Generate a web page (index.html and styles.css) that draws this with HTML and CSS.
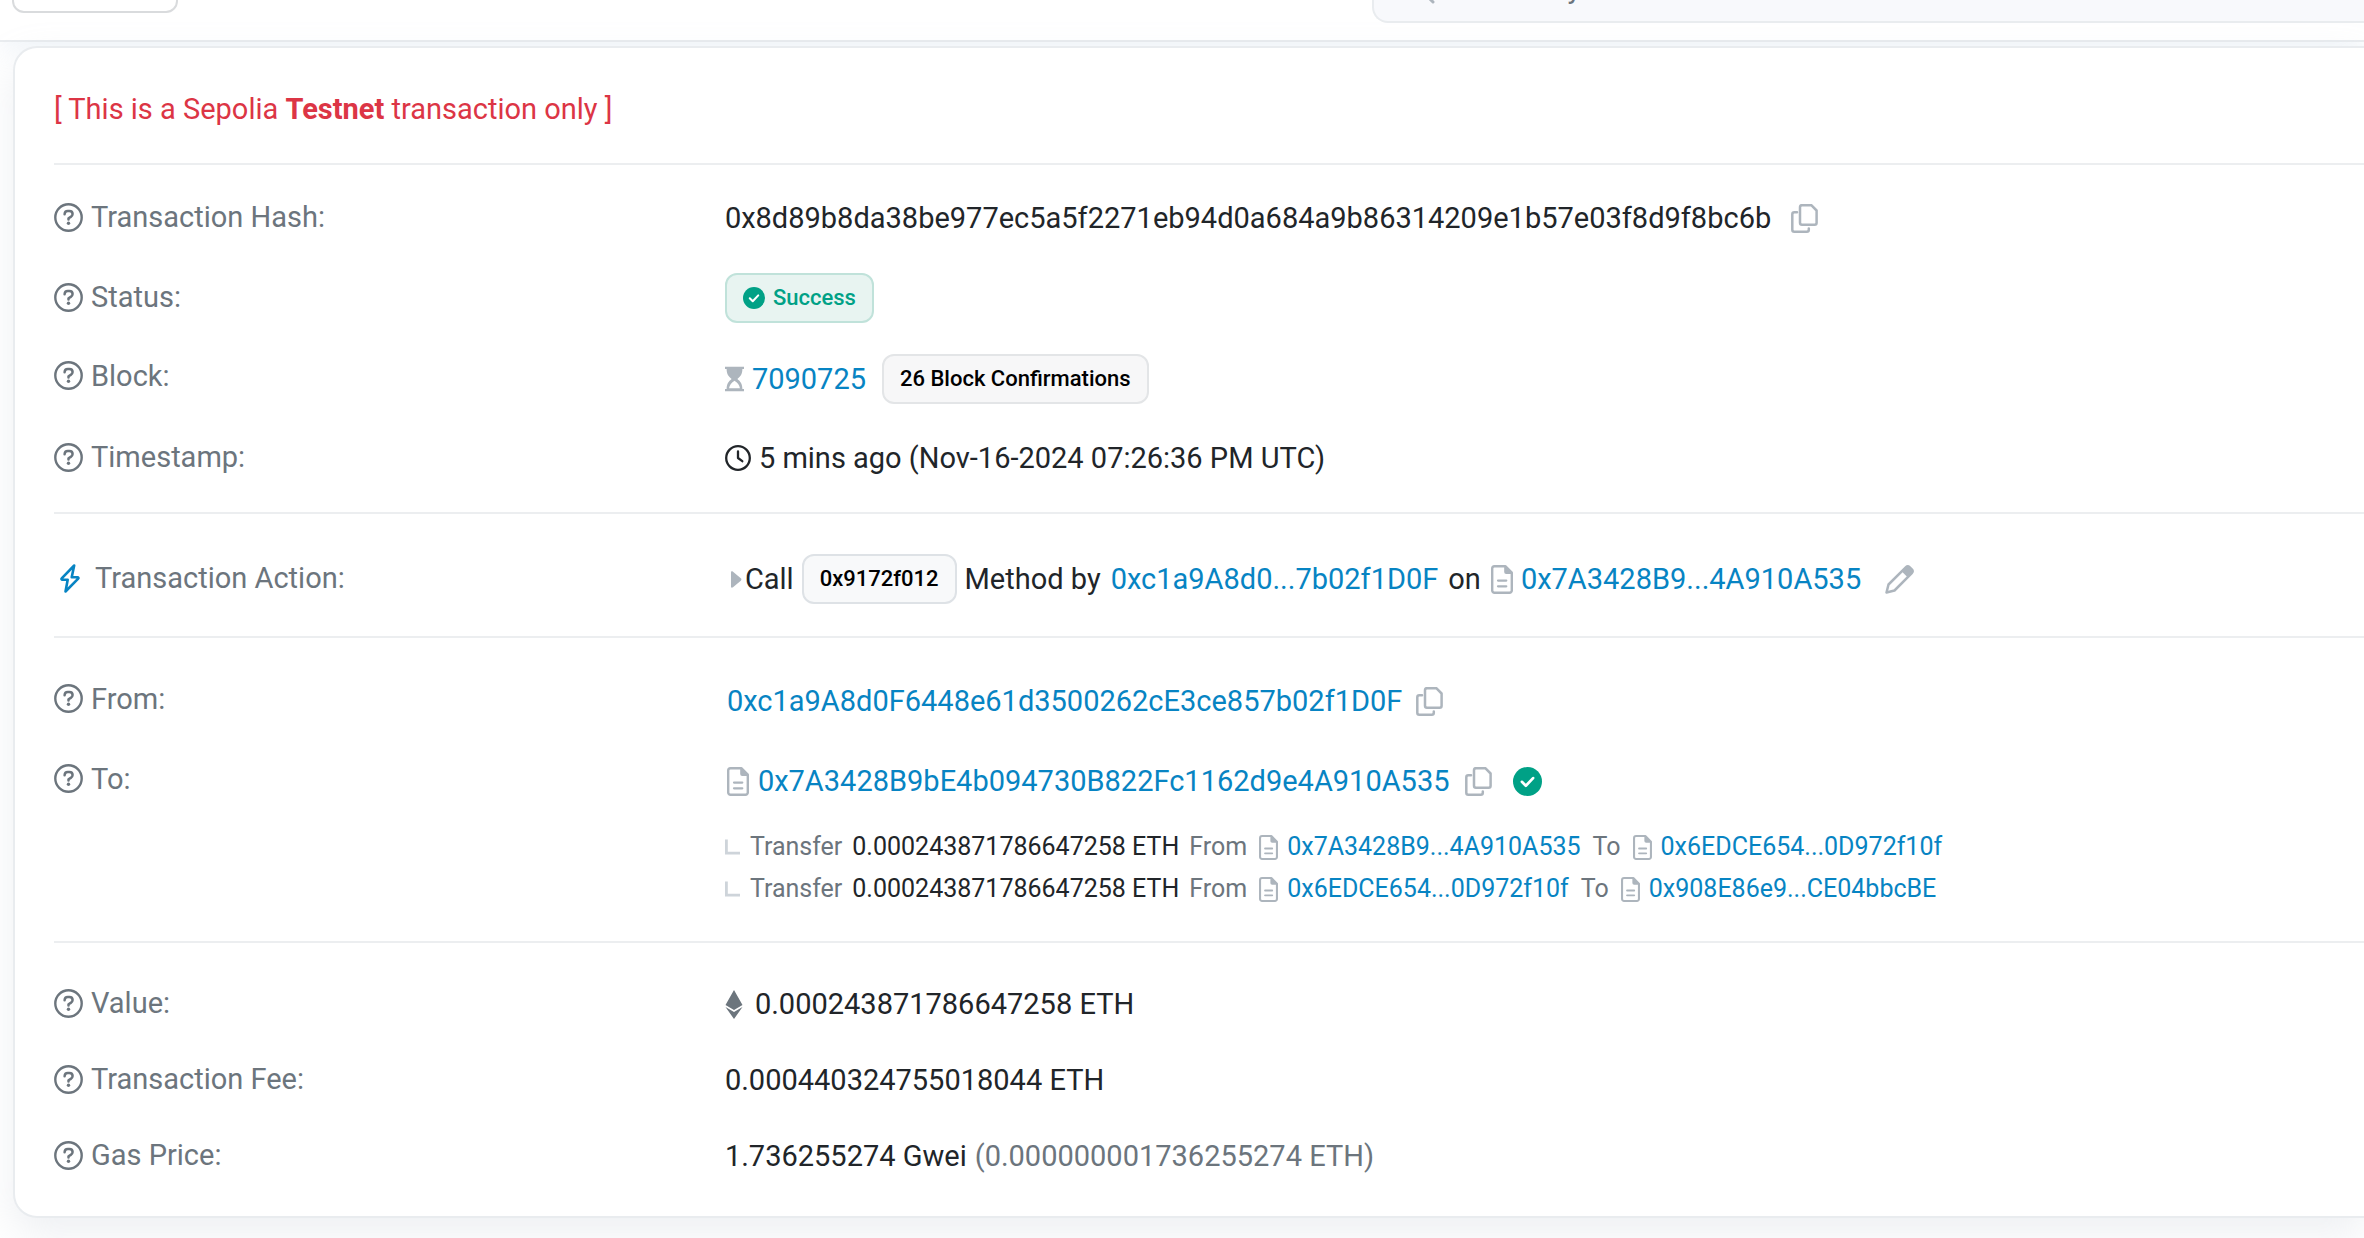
FILE: index.html
```html
<!DOCTYPE html>
<html lang="en">
<head>
<meta charset="utf-8">
<title>Transaction Details</title>
<link rel="stylesheet" href="styles.css">
</head>
<body>
<svg class="sprite" aria-hidden="true">
  <symbol id="help" viewBox="0 0 29 29">
    <circle cx="14.5" cy="14.5" r="13.2" fill="none" stroke="currentColor" stroke-width="2.4"/>
    <path d="M10.6 11.2c.1-2 1.400-3.100 3.100-3.100h1.700c1.900 0 3.200 1.300 3.200 3 0 1.300-.7 2.100-1.800 2.800l-2.300 1.400v1.300" fill="none" stroke="currentColor" stroke-width="2.500" stroke-linecap="round" stroke-linejoin="round"/>
    <circle cx="14.500" cy="20.300" r="1.700" fill="currentColor"/>
  </symbol>
  <symbol id="copy" viewBox="0 0 27 29">
    <path d="M11 1.200h9.300l5.300 5.300v12.200a2 2 0 0 1-2 2H11a2 2 0 0 1-2-2V3.200a2 2 0 0 1 2-2zM6 8.300H3.300a2 2 0 0 0-2 2v15.400a2 2 0 0 0 2 2h12.500a2 2 0 0 0 2-2v-1.200" fill="none" stroke="currentColor" stroke-width="2.500" stroke-linecap="round" stroke-linejoin="round"/>
  </symbol>
  <symbol id="doc" viewBox="0 0 22 29">
    <path d="M3.500 1.200h10.800l6.500 6.500v17.800a2.300 2.300 0 0 1-2.300 2.300h-15a2.300 2.300 0 0 1-2.300-2.300v-22a2.300 2.300 0 0 1 2.300-2.300z" fill="none" stroke="currentColor" stroke-width="2.400" stroke-linejoin="round"/>
    <path d="M13.200 1.200h1.100l6.500 6.500v1.300h-5.600a2 2 0 0 1-2-2z" fill="currentColor"/>
    <path d="M7 15.600h8.300M7 21.300h8.300" stroke="currentColor" stroke-width="2.200" stroke-linecap="round"/>
  </symbol>
  <symbol id="check" viewBox="0 0 28 28">
    <circle cx="14" cy="14" r="14" fill="currentColor"/>
    <path d="M8.600 14.300l3.800 3.800 7-7.400" fill="none" stroke="#fff" stroke-width="2.600" stroke-linecap="round" stroke-linejoin="round"/>
  </symbol>
  <symbol id="elbow" viewBox="0 0 16 16">
    <path d="M1.500 0v14.500H16" fill="none" stroke="currentColor" stroke-width="3"/>
  </symbol>
</svg>

<header class="topbar">
  <button class="topbar-button" type="button" aria-label="Network"></button>
  <div class="search">
    <svg class="search-icon" viewBox="0 0 32 32" aria-hidden="true"><circle cx="13" cy="13" r="11" fill="none" stroke="currentColor" stroke-width="3"/><path d="M21 21l9 9" stroke="currentColor" stroke-width="3" stroke-linecap="round"/></svg>
    <input class="search-input" type="text" placeholder="Search by Address" aria-label="Search">
  </div>
</header>

<main class="card">
  <p class="notice">[ This is a Sepolia <strong>Testnet</strong> transaction only ]</p>

  <dl class="section overview">
    <div class="row">
      <dt class="label"><svg class="icon-help"><use href="#help"/></svg>Transaction Hash:</dt>
      <dd class="value"><span>0x8d89b8da38be977ec5a5f2271eb94d0a684a9b86314209e1b57e03f8d9f8bc6b</span><button class="icon-button hash-copy" type="button" aria-label="Copy hash"><svg class="icon-copy"><use href="#copy"/></svg></button></dd>
    </div>
    <div class="row">
      <dt class="label"><svg class="icon-help"><use href="#help"/></svg>Status:</dt>
      <dd class="value"><span class="badge badge-success"><svg class="icon-check-small"><use href="#check"/></svg>Success</span></dd>
    </div>
    <div class="row">
      <dt class="label label-high"><svg class="icon-help"><use href="#help"/></svg>Block:</dt>
      <dd class="value value-low"><svg class="icon-hourglass" viewBox="0 0 20 26"><path d="M0 0h20v2.500h-1.700c0 5.200-2 8-5.300 10.500 3.300 2.500 5.300 5.300 5.300 10.500H20V26H0v-2.500h1.700c0-5.200 2-8 5.300-10.500C3.700 10.500 1.700 7.700 1.700 2.500H0z" fill="currentColor"/><path d="M4.300 22.800c.4-3.500 2.600-6 5.700-8 3.100 2 5.300 4.500 5.700 8z" fill="#fff"/></svg><a class="link" href="#block">7090725</a><span class="badge badge-block">26 Block Confirmations</span></dd>
    </div>
    <div class="row">
      <dt class="label"><svg class="icon-help"><use href="#help"/></svg>Timestamp:</dt>
      <dd class="value"><svg class="icon-clock" viewBox="0 0 26 26"><circle cx="13" cy="13" r="11.800" fill="none" stroke="currentColor" stroke-width="2.300"/><path d="M13 6.500V13l4.300 3.200" fill="none" stroke="currentColor" stroke-width="2.300" stroke-linecap="round" stroke-linejoin="round"/></svg><span>5 mins ago (Nov-16-2024 07:26:36 PM UTC)</span></dd>
    </div>
  </dl>

  <dl class="section action">
    <div class="row">
      <dt class="label label-action"><svg class="icon-bolt" viewBox="0 0 29 29"><path d="M20.200 1.500L7.700 14.300c-.6.600-.2 1.500.7 1.500h5.300L11.500 27.500 24.200 14.700c.6-.6.200-1.500-.7-1.500h-5.800z" fill="none" stroke="currentColor" stroke-width="2.600" stroke-linejoin="round"/></svg>Transaction Action:</dt>
      <dd class="value"><svg class="icon-caret" viewBox="0 0 11 17"><path d="M0 1.500C0 .2 1 0 2 .8l7.800 6.500c.8.700.8 1.700 0 2.400L2 16.200c-1 .8-2 .6-2-.7z" fill="currentColor"/></svg><span>Call</span><span class="badge badge-method">0x9172f012</span><span>Method by</span><a class="link link-by" href="#sender">0xc1a9A8d0...7b02f1D0F</a><span class="on">on</span><svg class="icon-doc"><use href="#doc"/></svg><a class="link" href="#contract">0x7A3428B9...4A910A535</a><button class="icon-button edit" type="button" aria-label="Edit note"><svg class="icon-pencil" viewBox="0 0 29 29"><path d="M1.500 27.500l2-8L21 2.200a2.500 2.500 0 0 1 3.500 0l2.300 2.300a2.500 2.500 0 0 1 0 3.500L9.500 25.500z" fill="none" stroke="currentColor" stroke-width="2.500" stroke-linejoin="round"/><path d="M16.800 6.500L21 2.200a2.500 2.500 0 0 1 3.500 0l2.300 2.300a2.500 2.500 0 0 1 0 3.500l-4.200 4.200z" fill="currentColor"/></svg></button></dd>
    </div>
  </dl>

  <dl class="section parties">
    <div class="row">
      <dt class="label label-high"><svg class="icon-help"><use href="#help"/></svg>From:</dt>
      <dd class="value"><a class="link address-from" href="#sender">0xc1a9A8d0F6448e61d3500262cE3ce857b02f1D0F</a><button class="icon-button address-copy" type="button" aria-label="Copy sender address"><svg class="icon-copy"><use href="#copy"/></svg></button></dd>
    </div>
    <div class="row row-to">
      <dt class="label label-high"><svg class="icon-help"><use href="#help"/></svg>To:</dt>
      <dd>
        <div class="value value-to"><svg class="icon-doc"><use href="#doc"/></svg><a class="link" href="#contract">0x7A3428B9bE4b094730B822Fc1162d9e4A910A535</a><button class="icon-button address-copy" type="button" aria-label="Copy contract address"><svg class="icon-copy"><use href="#copy"/></svg></button><svg class="icon-check"><use href="#check"/></svg></div>
        <ul class="transfers">
          <li class="transfer"><svg class="icon-elbow"><use href="#elbow"/></svg><span class="muted">Transfer</span><span>0.000243871786647258 ETH</span><span class="muted">From</span><span class="party"><svg class="icon-doc-small"><use href="#doc"/></svg><a class="link" href="#contract">0x7A3428B9...4A910A535</a></span><span class="muted">To</span><span class="party"><svg class="icon-doc-small"><use href="#doc"/></svg><a class="link" href="#router">0x6EDCE654...0D972f10f</a></span></li>
          <li class="transfer"><svg class="icon-elbow"><use href="#elbow"/></svg><span class="muted">Transfer</span><span>0.000243871786647258 ETH</span><span class="muted">From</span><span class="party"><svg class="icon-doc-small"><use href="#doc"/></svg><a class="link" href="#router">0x6EDCE654...0D972f10f</a></span><span class="muted">To</span><span class="party"><svg class="icon-doc-small"><use href="#doc"/></svg><a class="link" href="#target">0x908E86e9...CE04bbcBE</a></span></li>
        </ul>
      </dd>
    </div>
  </dl>

  <dl class="section amounts">
    <div class="row">
      <dt class="label"><svg class="icon-help"><use href="#help"/></svg>Value:</dt>
      <dd class="value value-eth"><svg class="icon-eth" viewBox="0 0 18 29"><path d="M9 0l8.500 15L9 20 .5 15zM.5 17L9 22l8.500-5L9 29z" fill="currentColor"/></svg><span>0.000243871786647258 ETH</span></dd>
    </div>
    <div class="row">
      <dt class="label"><svg class="icon-help"><use href="#help"/></svg>Transaction Fee:</dt>
      <dd class="value">0.000440324755018044 ETH</dd>
    </div>
    <div class="row">
      <dt class="label"><svg class="icon-help"><use href="#help"/></svg>Gas Price:</dt>
      <dd class="value"><span>1.736255274 Gwei</span><span class="muted">(0.000000001736255274 ETH)</span></dd>
    </div>
  </dl>
</main>
</body>
</html>
```
FILE: styles.css
```css
* {
  box-sizing: border-box;
}

body {
  margin: 0;
  background: #fff;
  color: #212529;
  font-family: Roboto, "Liberation Sans", sans-serif;
  font-size: 29px;
  line-height: 44px;
  overflow-x: hidden;
}

dl, dd, p, ul {
  margin: 0;
  padding: 0;
}

svg {
  display: block;
  flex: none;
}

.sprite {
  position: absolute;
  width: 0;
  height: 0;
}

/* Top bar, scrolled partly out of view */
.topbar {
  display: flex;
  justify-content: space-between;
  align-items: flex-start;
  height: 42px;
  padding-left: 12px;
  border-bottom: 2px solid #e9ecef;
  background: #fff;
  box-shadow: 0 8px 24px rgba(189, 209, 229, 0.2);
  overflow: hidden;
}

.topbar-button {
  width: 166px;
  height: 60px;
  margin-top: -47px;
  border: 2px solid #d9dbdd;
  border-radius: 12px;
  background: #fff;
}

.search {
  display: flex;
  align-items: center;
  gap: 20px;
  width: calc(42% + 4px);
  height: 70px;
  margin-top: -47px;
  padding-left: 29px;
  border: 2px solid #e9ecef;
  border-right: 0;
  border-radius: 16px 0 0 16px;
  background: #f8f9fc;
}

.search-icon {
  width: 32px;
  height: 32px;
  color: #adb5bd;
}

.search-input {
  flex: 1;
  min-width: 0;
  padding: 0;
  border: 0;
  background: transparent;
  font: inherit;
}

.search-input::placeholder {
  color: #6c757d;
  opacity: 1;
}

/* Card */
.card {
  margin: 4px 0 20px 13px;
  padding-left: 39px;
  border: 2px solid #e9ecef;
  border-right: 0;
  border-radius: 24px 0 0 24px;
  background: #fff;
  box-shadow: 0 16px 38px rgba(189, 197, 209, 0.25);
}

.notice {
  padding: 39px 0 32px;
  color: #dc3545;
}

.section {
  border-top: 2px solid #eceef0;
}

.overview {
  padding: 12px 0 15px;
}

.action {
  padding: 24px 0 18px;
}

.parties {
  padding: 22px 0 32px;
}

.amounts {
  padding: 22px 0 23px;
}

.row {
  display: grid;
  grid-template-columns: calc(29% + 1px) 1fr;
  align-items: center;
  min-height: 80px;
}

.row-to {
  align-items: start;
}

.amounts .row {
  min-height: 76px;
}

.label {
  display: flex;
  align-items: center;
  gap: 8px;
  color: #6c757d;
}

.label-high {
  padding-bottom: 3px;
}

.row-to .label {
  min-height: 80px;
}

.label-action {
  gap: 12px;
}

.value {
  display: flex;
  align-items: center;
  gap: 8px;
  padding-top: 2px;
  white-space: nowrap;
}

.value-low {
  padding-top: 4px;
}

.value-to {
  gap: 9px;
  min-height: 80px;
  padding-left: 2px;
}

.value-eth {
  gap: 12px;
}

.link {
  color: #0784c3;
  text-decoration: none;
}

.muted {
  color: #6c757d;
}

/* Badges */
.badge {
  display: inline-flex;
  align-items: center;
  gap: 8px;
  height: 50px;
  padding: 0 16px;
  border: 2px solid #e3e5e7;
  border-radius: 12px;
  background: #f7f7f8;
  color: #000;
  font-size: 22px;
  font-weight: 500;
}

.badge-success {
  border-color: #c0e2da;
  background: #e8f4f1;
  color: #00a186;
}

.badge-block {
  margin-left: 8px;
}

.badge-method {
  border-color: #dee2e6;
  background: #f8f9fa;
}

.link-by {
  margin-left: 2px;
}

.on {
  margin: 0 2px;
}

.address-from {
  margin-left: 2px;
}

/* Buttons that hold only an icon */
.icon-button {
  padding: 0;
  border: 0;
  background: none;
  color: #adb5bd;
}

.hash-copy {
  margin-left: 12px;
}

.address-copy {
  margin-left: 6px;
}

.edit {
  margin-left: 16px;
}

/* Transfers */
.transfers {
  margin-top: 5px;
  list-style: none;
  font-size: 25px;
  line-height: 42px;
}

.transfer {
  display: flex;
  align-items: center;
  gap: 10px;
  padding-top: 1px;
  margin-bottom: -1px;
  white-space: nowrap;
}

.party {
  display: flex;
  align-items: center;
  gap: 9px;
  margin: 0 2px;
}

/* Icons */
.icon-help,
.icon-pencil,
.icon-bolt {
  width: 29px;
  height: 29px;
}

.icon-bolt {
  color: #0784c3;
}

.icon-copy {
  width: 27px;
  height: 29px;
}

.icon-doc {
  width: 22px;
  height: 29px;
  color: #adb5bd;
}

.icon-doc-small {
  width: 19px;
  height: 25px;
  color: #adb5bd;
}

.icon-hourglass {
  width: 19px;
  height: 26px;
  color: #adb5bd;
}

.icon-clock {
  width: 26px;
  height: 26px;
}

.icon-caret {
  width: 11px;
  height: 17px;
  margin: 0 0 0 6px;
  margin-right: -5px;
  color: #adb5bd;
}

.icon-check {
  width: 29px;
  height: 29px;
  margin-left: 12px;
  color: #00a186;
}

.icon-check-small {
  width: 22px;
  height: 22px;
}

.icon-elbow {
  width: 15px;
  height: 16px;
  color: #ced4da;
}

.icon-eth {
  width: 18px;
  height: 29px;
  color: #6c757d;
}
```
